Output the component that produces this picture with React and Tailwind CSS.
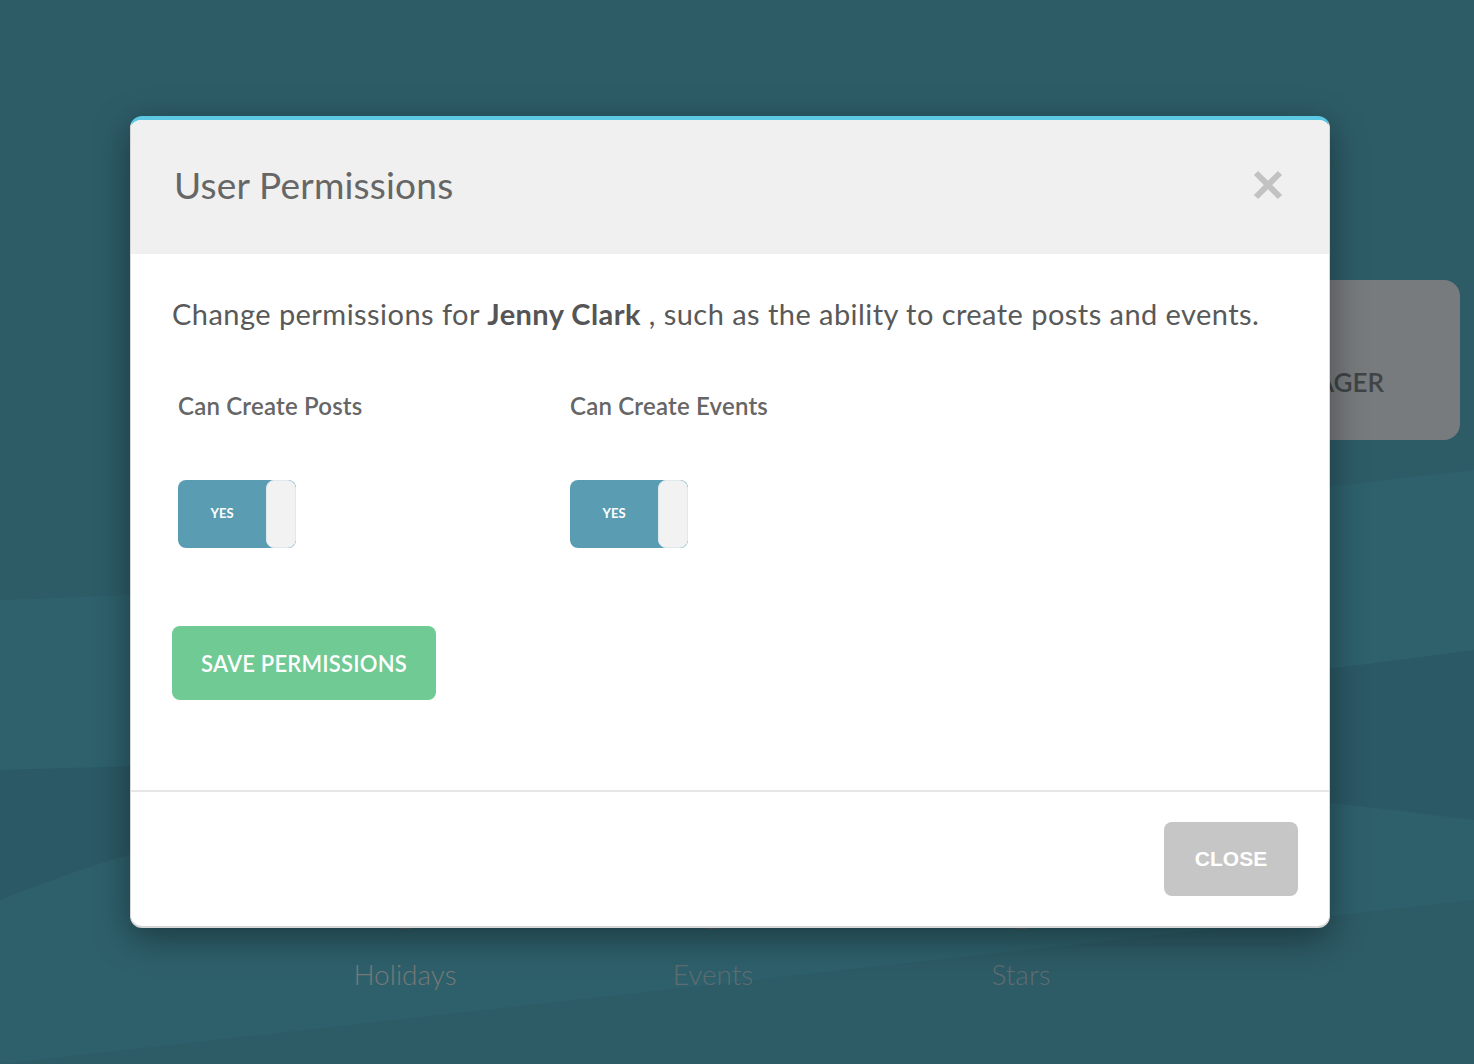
import React, { useState } from 'react';

const font = { fontFamily: 'Lato, "Noto Sans", sans-serif' };

const Toggle = ({ on, onChange }) => (
  <button
    type="button"
    onClick={() => onChange(!on)}
    className="flex h-[68px] w-[118px] overflow-hidden rounded-[8px] bg-[#5a9db3]"
  >
    <span className="flex h-full w-[88px] items-center justify-center text-[13px] font-bold text-white">
      {on ? 'YES' : 'NO'}
    </span>
    <span className="h-full w-[30px] rounded-[8px] border border-[#dfe9ec] bg-[#f2f2f2]" />
  </button>
);

const Circle = ({ label, color }) => (
  <div className="flex w-[160px] flex-col items-center">
    <div className="h-[90px] w-[90px] rounded-full border-[4px] border-[#5a5f61]" />
    <span className={`mt-[24px] text-[28px] font-light ${color}`}>{label}</span>
  </div>
);

const App = () => {
  const [canPost, setCanPost] = useState(true);
  const [canEvent, setCanEvent] = useState(true);

  return (
    <div className="relative h-[1064px] w-[1474px] overflow-hidden bg-[#2d5c67]" style={font}>
      {/* page behind the dialog */}
      <svg className="absolute inset-0" width="1474" height="1064" viewBox="0 0 1474 1064">
        <path d="M0 600 C 300 590, 700 560, 1474 470 L1474 1064 L0 1064 Z" fill="#2e616c" />
        <path d="M0 770 C 400 760, 800 740, 1474 650 L1474 1064 L0 1064 Z" fill="#2b5965" />
        <path d="M0 900 C 300 780, 700 720, 1474 820 L1474 1064 L0 1064 Z" fill="#2e606b" />
        <path d="M0 1064 L1474 900 L1474 1064 Z" fill="#2d5b66" />
      </svg>

      <div className="relative flex flex-col pt-[280px]">
        <div className="flex justify-end pr-[14px]">
          <div className="flex h-[160px] w-[420px] items-end justify-end rounded-[16px] bg-[#777b7d] pb-[38px] pr-[76px]">
            <span className="text-[26px] font-semibold text-[#3f4446]">MANAGER</span>
          </div>
        </div>
        <div className="mt-[399px] flex gap-[148px] pl-[325px]">
          <Circle label="Holidays" color="text-[#787878]" />
          <Circle label="Events" color="text-[#5f6e72]" />
          <Circle label="Stars" color="text-[#5f6e72]" />
        </div>
      </div>

      {/* dialog */}
      <div className="absolute inset-0 pl-[130px] pt-[116px]">
        <div className="w-[1200px] overflow-hidden rounded-[12px] border-x-[1px] border-b-[2px] border-t-[4px] border-x-[#d6d6d6] border-b-[#d6d6d6] border-t-[#5cc8e3] bg-white shadow-[0_10px_36px_rgba(0,0,0,0.4)]">
          <div className="flex h-[134px] items-center justify-between bg-[#f0f0f0] pb-[4px] pl-[43px] pr-[46px]">
            <h2 className="text-[37px] leading-[44px] tracking-[0.2px] text-[#666]">User Permissions</h2>
            <button type="button" className="text-[#c2c2c2]">
              <svg width="30" height="30" viewBox="0 0 30 30">
                <path d="M3 3 L27 27 M27 3 L3 27" stroke="currentColor" strokeWidth="6" />
              </svg>
            </button>
          </div>

          <div className="px-[41px] pt-[42px] pb-[90px]">
            <p className="text-[29px] leading-[36px] tracking-[0.45px] text-[#595959]">
              Change permissions for <strong className="font-bold text-[#555]">Jenny Clark</strong> , such as the ability to create posts and events.
            </p>

            <div className="mt-[59px] flex pl-[6px]">
              <div className="flex w-[392px] flex-col gap-[59px]">
                <span className="text-[24px] font-semibold leading-[30px] tracking-[0.2px] text-[#666]">Can Create Posts</span>
                <Toggle on={canPost} onChange={setCanPost} />
              </div>
              <div className="flex w-[392px] flex-col gap-[59px]">
                <span className="text-[24px] font-semibold leading-[30px] tracking-[0.2px] text-[#666]">Can Create Events</span>
                <Toggle on={canEvent} onChange={setCanEvent} />
              </div>
            </div>

            <button
              type="button"
              className="mt-[78px] h-[74px] w-[264px] rounded-[8px] bg-[#6fca94] text-[22px] font-semibold tracking-[0.2px] text-white"
            >
              SAVE PERMISSIONS
            </button>
          </div>

          <div className="flex justify-end border-t-[2px] border-[#e6e6e6] px-[31px] pt-[30px] pb-[30px]">
            <button
              type="button"
              className="h-[74px] w-[134px] rounded-[8px] bg-[#c6c6c6] text-[21px] font-bold text-white"
              style={{ fontFamily: '"Liberation Sans", Arial, sans-serif' }}
            >
              CLOSE
            </button>
          </div>
        </div>
      </div>
    </div>
  );
};

export default App;
